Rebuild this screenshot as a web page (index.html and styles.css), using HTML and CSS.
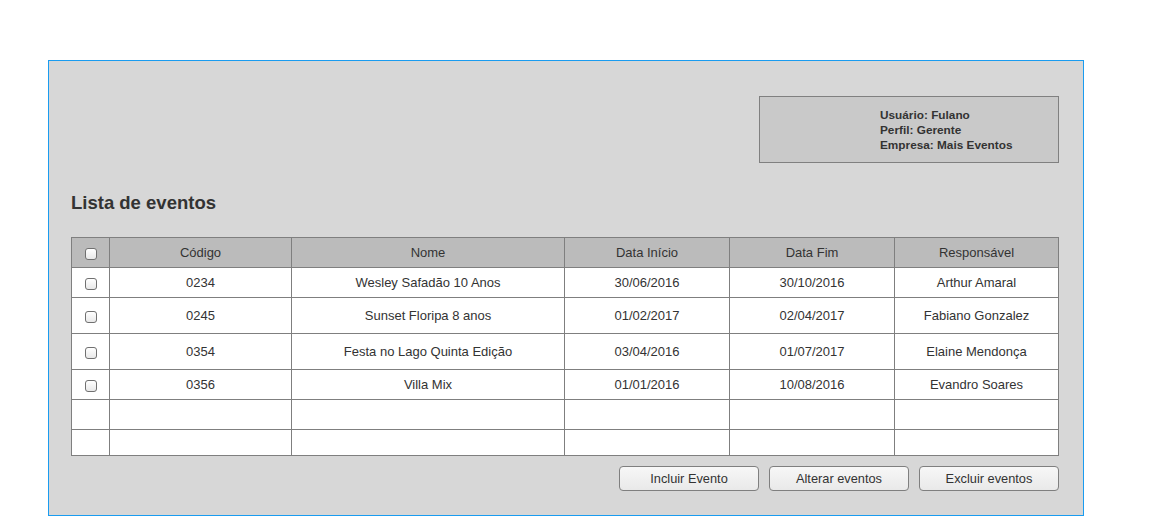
FILE: index.html
```html
<!DOCTYPE html>
<html lang="pt">
<head>
<meta charset="utf-8">
<title>Lista de eventos</title>
<link rel="stylesheet" href="styles.css">
</head>
<body>
<div class="panel">
  <div class="top">
    <div class="userbox">
      <div class="userinfo">
        <div>Usuário: Fulano</div>
        <div>Perfil: Gerente</div>
        <div>Empresa: Mais Eventos</div>
      </div>
    </div>
  </div>
  <h1 class="title">Lista de eventos</h1>
  <table class="grid">
    <colgroup>
      <col class="c0"><col class="c1"><col class="c2"><col class="c3"><col class="c4"><col class="c5">
    </colgroup>
    <thead>
      <tr class="hrow"><th><span class="cb"></span></th><th>Código</th><th>Nome</th><th>Data Início</th><th>Data Fim</th><th>Responsável</th></tr>
    </thead>
    <tbody>
      <tr class="r30"><td><span class="cb"></span></td><td>0234</td><td>Wesley Safadão 10 Anos</td><td>30/06/2016</td><td>30/10/2016</td><td>Arthur Amaral</td></tr>
      <tr class="r36"><td><span class="cb"></span></td><td>0245</td><td>Sunset Floripa 8 anos</td><td>01/02/2017</td><td>02/04/2017</td><td>Fabiano Gonzalez</td></tr>
      <tr class="r36"><td><span class="cb"></span></td><td>0354</td><td>Festa no Lago Quinta Edição</td><td>03/04/2016</td><td>01/07/2017</td><td>Elaine Mendonça</td></tr>
      <tr class="r30"><td><span class="cb"></span></td><td>0356</td><td>Villa Mix</td><td>01/01/2016</td><td>10/08/2016</td><td>Evandro Soares</td></tr>
      <tr class="r30"><td></td><td></td><td></td><td></td><td></td><td></td></tr>
      <tr class="r26"><td></td><td></td><td></td><td></td><td></td><td></td></tr>
    </tbody>
  </table>
  <div class="actions">
    <button class="btn">Incluir Evento</button>
    <button class="btn">Alterar eventos</button>
    <button class="btn">Excluir eventos</button>
  </div>
</div>
</body>
</html>
```
FILE: styles.css
```css
html, body {
  margin: 0;
  padding: 0;
  background: #ffffff;
}
body {
  padding: 60px 0 0 48px;
  font-family: "Liberation Sans", Arial, sans-serif;
  color: #333333;
}
.panel {
  box-sizing: border-box;
  width: 1036px;
  height: 456px;
  background: #d7d7d7;
  border: 1px solid #1a9cf0;
  padding: 35px 24px 0 22px;
  display: flex;
  flex-direction: column;
}
.top {
  display: flex;
  justify-content: flex-end;
}
.userbox {
  box-sizing: border-box;
  width: 300px;
  height: 67px;
  background: #c9c9c9;
  border: 1px solid #808080;
  padding: 11px 0 0 120px;
}
.userinfo {
  font-size: 11.8px;
  font-weight: bold;
  line-height: 15px;
  color: #333333;
}
.title {
  margin: 28px 0 0 0;
  font-size: 18.5px;
  font-weight: bold;
  line-height: 24px;
  color: #333333;
}
.grid {
  margin-top: 22px;
  width: 987px;
  border-collapse: collapse;
  table-layout: fixed;
  background: #ffffff;
  font-size: 13px;
}
.c0 { width: 38px; }
.c1 { width: 182px; }
.c2 { width: 273px; }
.c3 { width: 165px; }
.c4 { width: 165px; }
.c5 { width: 164px; }
.grid th, .grid td {
  border: 1px solid #7f7f7f;
  padding: 0;
  text-align: center;
  font-weight: normal;
  color: #333333;
}
.grid thead th {
  background: #bbbbbb;
}
.hrow { height: 30px; }
.r30 { height: 30px; }
.r36 { height: 36px; }
.r26 { height: 26px; }
.cb {
  display: inline-block;
  box-sizing: border-box;
  width: 12px;
  height: 12px;
  border: 1px solid #707070;
  border-radius: 3px;
  background: linear-gradient(#ffffff, #e8e8e8);
  vertical-align: middle;
  margin-top: 2px;
}
.actions {
  display: flex;
  justify-content: flex-end;
  gap: 10px;
  margin-top: 10px;
}
.btn {
  box-sizing: border-box;
  width: 140px;
  height: 25px;
  border: 1px solid #7f7f7f;
  border-radius: 4px;
  background: linear-gradient(#f7f7f7, #e9e9e9);
  font-family: "Liberation Sans", Arial, sans-serif;
  font-size: 12.8px;
  color: #333333;
  padding: 0;
}
```
